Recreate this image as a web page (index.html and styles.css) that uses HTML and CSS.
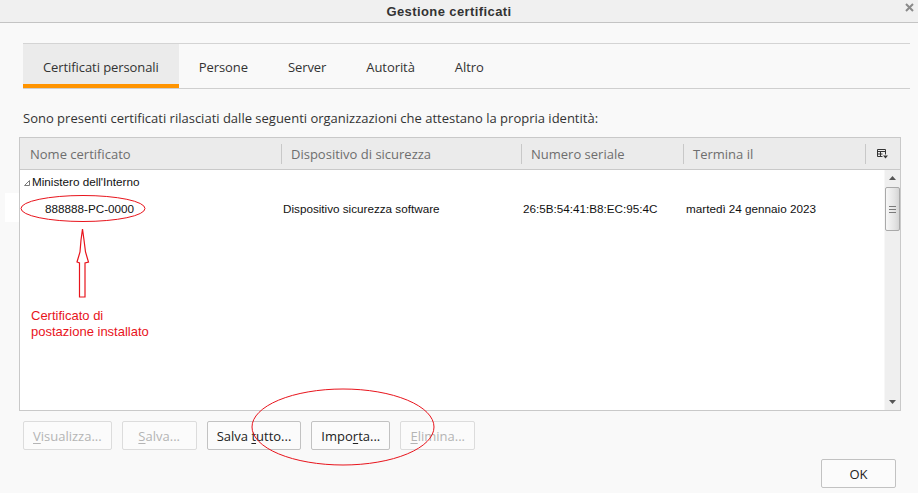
FILE: index.html
```html
<!DOCTYPE html>
<html lang="it">
<head>
<meta charset="utf-8">
<title>Gestione certificati</title>
<link rel="stylesheet" href="styles.css">
</head>
<body>
<div class="window">
  <div class="titlebar">
    <span class="title">Gestione certificati</span>
    <svg class="close" width="9" height="9" viewBox="0 0 9 9"><path d="M1 1 L8 8 M8 1 L1 8" stroke="#8a8a8a" stroke-width="2"/></svg>
  </div>
  <div class="content">
    <div class="tabs">
      <div class="tab selected">Certificati personali</div>
      <div class="tab">Persone</div>
      <div class="tab">Server</div>
      <div class="tab">Autorità</div>
      <div class="tab">Altro</div>
    </div>
    <p class="desc">Sono presenti certificati rilasciati dalle seguenti organizzazioni che attestano la propria identità:</p>
    <div class="tree">
      <div class="tree-head">
        <div class="hcell first">Nome certificato</div>
        <div class="hcell">Dispositivo di sicurezza</div>
        <div class="hcell">Numero seriale</div>
        <div class="hcell">Termina il</div>
        <div class="hcell picker">
          <svg width="11" height="10" viewBox="0 0 11 10"><path d="M0.5 0.5 H8.5 V5.5 M0.5 0.5 V7.5 H5.5 M0.5 2.5 H8.5 M3.5 2.5 V7.5 M0.5 5 H5.5" stroke="#333" fill="none"/><path d="M6 6.5 H11 L8.5 9.5 Z" fill="#333"/></svg>
        </div>
      </div>
      <div class="tree-body">
        <div class="rows">
          <div class="row group">
            <svg class="twisty" width="6" height="6" viewBox="0 0 6 6"><path d="M0.5 5.5 H5.5 V0.5 Z" stroke="#7a7a7a" fill="none"/></svg>
            <span>Ministero dell'Interno</span>
          </div>
          <div class="row cert">
            <div class="cell name">888888-PC-0000</div>
            <div class="cell">Dispositivo sicurezza software</div>
            <div class="cell">26:5B:54:41:B8:EC:95:4C</div>
            <div class="cell date">martedì 24 gennaio 2023</div>
          </div>
        </div>
        <div class="scrollbar">
          <div class="sb-btn"><svg width="7" height="4" viewBox="0 0 7 4"><path d="M0 4 L3.5 0 L7 4 Z" fill="#555"/></svg></div>
          <div class="thumb"><span class="grip"></span><span class="grip"></span><span class="grip"></span></div>
          <div class="sb-track"></div>
          <div class="sb-btn"><svg width="7" height="4" viewBox="0 0 7 4"><path d="M0 0 L7 0 L3.5 4 Z" fill="#555"/></svg></div>
        </div>
      </div>
    </div>
    <div class="buttons">
      <button class="btn" disabled><u>V</u>isualizza...</button>
      <button class="btn" disabled><u>S</u>alva...</button>
      <button class="btn">Salva <u>t</u>utto...</button>
      <button class="btn">Impo<u>r</u>ta...</button>
      <button class="btn" disabled><u>E</u>limina...</button>
    </div>
    <div class="footer">
      <button class="btn ok">OK</button>
    </div>
  </div>

  <div class="erase"></div>
  <svg class="annot" width="918" height="493" viewBox="0 0 918 493">
    <ellipse cx="83" cy="208.5" rx="62" ry="13" fill="none" stroke="#e8141c" stroke-width="1"/>
    <polygon points="82.5,229 84,240 85.5,252 88.5,262 85,263 85,297 79.5,297 79.5,263 77,262 80,252 81,240" fill="none" stroke="#e8141c" stroke-width="1.2"/>
    <ellipse cx="343" cy="427" rx="91" ry="38" fill="none" stroke="#e8141c" stroke-width="1"/>
  </svg>
  <div class="note">Certificato di<br>postazione installato</div>
</div>
</body>
</html>
```
FILE: styles.css
```css
* { box-sizing: border-box; }

body {
  margin: 0;
  background: #f9f9f9;
  font-family: "Open Sans", "Noto Sans", sans-serif;
  color: #222;
}

.window {
  position: relative;
  width: 918px;
  height: 493px;
  overflow: hidden;
  background: #f9f9f9;
}

.titlebar {
  height: 23px;
  background: #f0f0f0;
  border-bottom: 1px solid #c4c4c4;
  display: flex;
  align-items: center;
}

.title {
  flex: 1;
  text-align: center;
  padding-right: 7px;
  font: bold 13px "Liberation Sans", sans-serif;
  letter-spacing: 0.4px;
  color: #333;
}

.close {
  align-self: flex-start;
  margin-top: 3px;
  margin-right: 4px;
}

.content {
  padding: 20px 8px 0 23px;
}

.tabs {
  display: flex;
  height: 46px;
  border-top: 1px solid #d4d4d4;
  border-bottom: 1px solid #cfcfcf;
}

.tab {
  height: 44px;
  padding: 6px 20px 0;
  display: flex;
  align-items: center;
  font-size: 13px;
  letter-spacing: -0.08px;
  color: #333;
  border-bottom: 4px solid transparent;
}

.tab.selected {
  background: #ebebeb;
  border-bottom-color: #ff9400;
}

.desc {
  margin: 21px 0 0;
  font-size: 13px;
  line-height: 17px;
  color: #333;
}

.tree {
  margin: 10px 0 0 -4px;
  width: 882px;
  border: 1px solid #c9c9c9;
  background: #fff;
}

.tree-head {
  display: grid;
  grid-template-columns: 261px 240px 162px 182px 1fr;
  height: 32px;
  background: #ebebeb;
  border-bottom: 1px solid #c9c9c9;
}

.hcell {
  display: flex;
  align-items: center;
  padding-left: 10px;
  font-size: 13px;
  color: #6e6e6e;
  background: linear-gradient(#c8c8c8, #c8c8c8) no-repeat left center / 1px 20px;
}

.hcell.first {
  background: none;
}

.hcell.picker {
  padding-left: 12px;
}

.tree-body {
  display: flex;
  height: 240px;
}

.rows {
  flex: 1;
  font-family: "Liberation Sans", sans-serif;
  font-size: 11.7px;
  color: #111;
}

.row.group {
  height: 23px;
  padding: 0 0 0 4px;
  display: flex;
  align-items: center;
  gap: 2px;
}

.twisty {
  margin-top: 3px;
}

.row.cert {
  height: 30px;
  display: grid;
  grid-template-columns: 261px 240px 162px 182px;
  align-items: center;
}

.cell {
  padding-left: 2px;
}

.cell.name {
  padding-left: 25px;
}

.cell.date {
  padding-left: 3px;
}

.scrollbar {
  width: 16px;
  display: flex;
  flex-direction: column;
  background: #efefef;
  border-left: 1px solid #f7f7f7;
}

.sb-btn {
  height: 16px;
  display: flex;
  align-items: center;
  justify-content: center;
}

.thumb {
  height: 44px;
  margin: 1px 0 0;
  border: 1px solid #a9a9a9;
  border-radius: 2px;
  background: linear-gradient(to right, #f7f7f7, #e2e2e2 70%, #d4d4d4);
  display: flex;
  flex-direction: column;
  align-items: center;
  justify-content: center;
  gap: 2px;
}

.grip {
  width: 7px;
  height: 1px;
  background: #7a7a7a;
}

.sb-track {
  flex: 1;
}

.buttons {
  display: flex;
  gap: 10px;
  margin-top: 10px;
}

.btn {
  height: 29px;
  min-width: 75px;
  padding: 0 9px;
  border: 1px solid #c2c2c2;
  border-radius: 2px;
  background: #fbfbfb;
  font-family: "Open Sans", "Noto Sans", sans-serif;
  font-size: 13px;
  color: #222;
}

.btn:disabled {
  color: #b4b4b4;
  border-color: #dcdcdc;
}

.btn u {
  text-underline-offset: 2px;
}

.footer {
  display: flex;
  justify-content: flex-end;
  margin: 9px 14px 0 0;
}

.btn.ok {
  width: 75px;
}

.erase {
  position: absolute;
  left: 5px;
  top: 193px;
  width: 14px;
  height: 29px;
  background: #fff;
}

.annot {
  position: absolute;
  left: 0;
  top: 0;
  pointer-events: none;
}

.note {
  position: absolute;
  left: 31px;
  top: 308px;
  font: 13px/16px "Liberation Sans", sans-serif;
  color: #e8141c;
}
```
